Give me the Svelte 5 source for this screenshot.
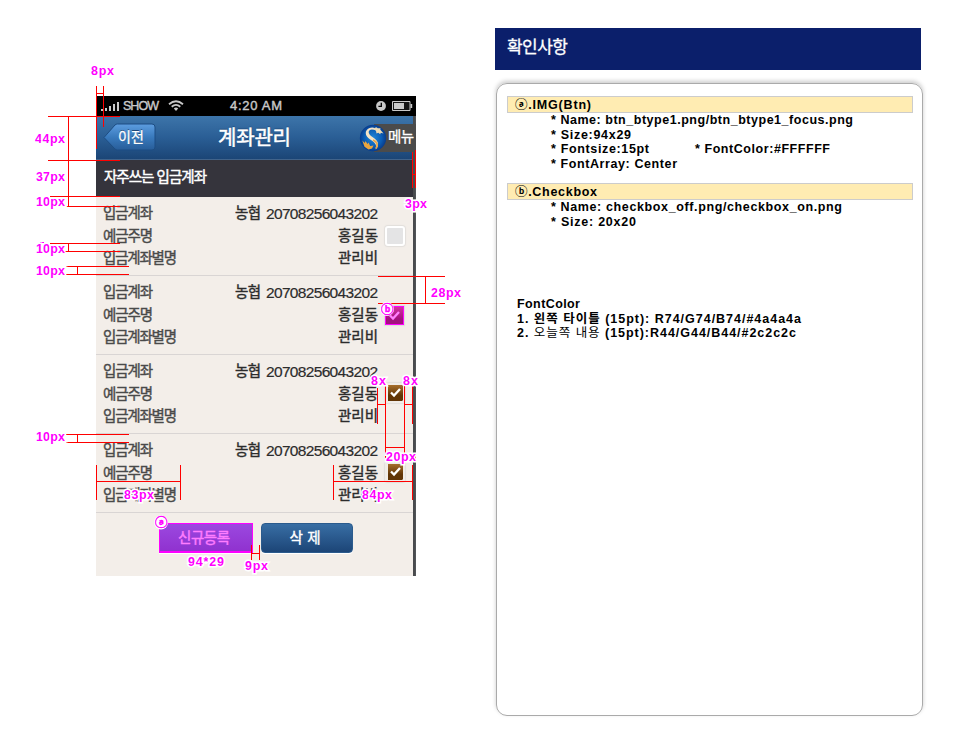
<script>
  // Spreads the letters of a text so that it takes up the given width.
  function fit(node, width) {
    const count = [...node.textContent].length;
    const natural = node.getBoundingClientRect().width;
    const spacing = (width - natural) / Math.max(1, count - 1);
    node.style.letterSpacing = `${spacing}px`;
    node.style.marginRight = `${-spacing}px`;
  }

  const accounts = [
    { checked: false },
    { checked: true },
    { checked: true },
    { checked: true }
  ];

  const guides = [
    'M96.5 86V149', 'M103.5 86V127', 'M96 93.5H103',
    'M48 116.5H120', 'M48 160.5H120', 'M50 196.5H120', 'M66 206.5H120', 'M68.5 116V206',
    'M50 243.5H120', 'M65 251.5H120', 'M68.5 243V251',
    'M66 266.5H129', 'M66 274.5H129', 'M77.5 266V274',
    'M412.5 152V188', 'M415.5 150V188', 'M412 174.5H416',
    'M378 276.5H445', 'M378 303.5H445', 'M425.5 276V303',
    'M66 434.5H129', 'M66 442.5H129', 'M77.5 434V442',
    'M96.5 465V500', 'M180.5 465V500', 'M96 481.5H180',
    'M377.5 388V424', 'M385.5 386V458', 'M404.5 386V458', 'M412.5 386V424',
    'M377 404.5H385', 'M404 404.5H412', 'M385 447.5H404',
    'M333.5 465V500', 'M412.5 465V500', 'M333 481.5H412',
    'M251.5 545V560', 'M259.5 545V560', 'M251 553.5H259'
  ].join('');

  const labels = [
    [91, 75, 23, '8px'], [35, 143, 30, '44px'], [36, 181, 29, '37px'], [36, 206, 29, '10px'],
    [405, 208, 22, '3px'], [36, 253, 29, '10px'], [36, 275, 29, '10px'], [431, 297, 30, '28px'],
    [371, 385, 15, '8x'], [403, 385, 15, '8x'], [36, 441, 29, '10px'], [386, 461, 30, '20px'],
    [124, 499, 30, '83px'], [362, 499, 30, '84px'], [188, 566, 36, '94*29'], [245, 570, 23, '9px']
  ];
</script>

<main>
  <section class="phone">
    <div class="status">
      <svg class="bars" width="18" height="10" viewBox="0 0 18 10"><path d="M0 8h2v2H0zM4 7h2v3H4zM8 5h2v5H8zM12 3h2v7h-2zM16 1h2v9h-2z" /></svg>
      <span class="carrier"><span class="fit" use:fit={36}>SHOW</span></span>
      <svg class="wifi" width="16" height="11" viewBox="0 0 16 11"><path d="M1 4.2Q8-1.6 15 4.2M3.7 6.7Q8 3 12.3 6.7" fill="none" stroke="#c9c9c9" stroke-width="1.8" /><path d="M5.8 8.4Q8 6.8 10.2 8.4L8 11z" /></svg>
      <span class="time"><span class="fit" use:fit={52}>4:20 AM</span></span>
      <svg class="clock" width="10" height="10" viewBox="0 0 10 10"><circle cx="5" cy="5" r="4.9" /><path d="M5.3 1.7V5.4H2.4" fill="none" stroke="#000" stroke-width="1.3" /></svg>
      <svg class="battery" width="21" height="10" viewBox="0 0 21 10"><path d="M.5.5h17.5v9H.5z" fill="#151515" stroke="#c9c9c9" /><path d="M2 2h10v6H2zM18.5 3h1.7v4h-1.7z" /></svg>
    </div>
    <div class="screen">
      <div class="content">
        <header>
          <div class="back">
            <svg width="53" height="29" viewBox="0 0 53 29">
              <defs><linearGradient id="backFill" x2="0" y2="1"><stop stop-color="#5d9de0" /><stop offset=".5" stop-color="#397abd" /><stop offset="1" stop-color="#285d99" /></linearGradient></defs>
              <path d="M1 14.5 12 2Q13 1 14.500 1H49Q52 1 52 4V24Q52 27 49 27H14.500Q13 27 12 26Z" fill="url(#backFill)" stroke="#1d4d83" />
            </svg>
            <span class="fit" use:fit={26}>이전</span>
          </div>
          <h1><span class="fit" use:fit={73}>계좌관리</span></h1>
          <div class="menu">
            <svg width="28" height="28" viewBox="0 0 28 28">
              <defs><radialGradient id="ball" cx=".5" cy=".5" r=".55"><stop stop-color="#2387d8" /><stop offset=".6" stop-color="#0b5db5" /><stop offset="1" stop-color="#073280" /></radialGradient></defs>
              <circle cx="14" cy="14" r="13.2" fill="url(#ball)" />
              <path d="M17.500 6.500Q11 4 9.800 7.200 9 10 13.800 13.300C20 17.300 20.500 21.500 16.500 25.500 18.500 20.500 15.500 18.500 11.200 15.600 5.500 11.600 5.500 6.500 10 4.200 13.500 2.800 16.500 3.500 17.500 6.500Z" fill="#f4e3c6" />
              <path d="M15 4.200 17.300 3.200 18.800 4.300 21.500 4.200 21.300 5.800 24.500 9.400 21.800 8.700 21.200 10.200 19.300 8.700 17.500 9.500 17 7Z" fill="#eedbb5" />
              <path d="M3.300 16.500 5.800 19 6.500 17 8.500 20 9.500 18.500 11.200 22 14.500 21.500 13 24.500 9.500 25.500 5.500 22.800Z" fill="#eba53e" />
              <path d="M14 16Q20.500 19 17 24.500" fill="none" stroke="#e9a64c" stroke-width="1.800" />
            </svg>
            <span class="fit" use:fit={26}>메뉴</span>
          </div>
        </header>
        <h2><span class="fit" use:fit={103}>자주쓰는 입금계좌</span></h2>
        <ul>
          {#each accounts as account, i}
            <li>
              <dl>
                <div><dt><span class="fit" use:fit={50}>입금계좌</span></dt><dd><span class="bank"><span class="fit" use:fit={26}>농협</span></span><span class="number"><span class="fit" use:fit={112}>20708256043202</span></span></dd></div>
                <div><dt><span class="fit" use:fit={50}>예금주명</span></dt><dd><span class="fit" use:fit={40}>홍길동</span></dd></div>
                <div><dt><span class="fit" use:fit={74}>입금계좌별명</span></dt><dd><span class="fit" use:fit={40}>관리비</span></dd></div>
              </dl>
              <div class="box" class:on={account.checked} class:marked={i === 1}>
                {#if account.checked}
                  <svg width="15" height="15" viewBox="0 0 15 15"><path d="M3 7.500 6 10.500 12 4" fill="none" stroke-width="2.300" /></svg>
                {/if}
              </div>
            </li>
          {/each}
        </ul>
        <footer>
          <div class="button selected"><span class="fit" use:fit={52}>신규등록</span></div>
          <div class="button"><span class="fit" use:fit={31}>삭 제</span></div>
        </footer>
      </div>
    </div>
  </section>

  <aside>
    <h3><span class="fit" use:fit={61}>확인사항</span></h3>
    <div class="notes">
      <div class="heading"><span class="fit" use:fit={76}>ⓐ.IMG(Btn)</span></div>
      <div class="lines">
        <p><span class="fit" use:fit={302}>* Name: btn_btype1.png/btn_btype1_focus.png</span></p>
        <p><span class="fit" use:fit={80}>* Size:94x29</span></p>
        <p class="pair"><span class="first"><span class="fit" use:fit={98}>* Fontsize:15pt</span></span><span class="fit" use:fit={135}>* FontColor:#FFFFFF</span></p>
        <p><span class="fit" use:fit={126}>* FontArray: Center</span></p>
      </div>
      <div class="heading second"><span class="fit" use:fit={82}>ⓑ.Checkbox</span></div>
      <div class="lines">
        <p><span class="fit" use:fit={291}>* Name: checkbox_off.png/checkbox_on.png</span></p>
        <p><span class="fit" use:fit={85}>* Size: 20x20</span></p>
      </div>
      <div class="colors">
        <p><span class="fit" use:fit={63}>FontColor</span></p>
        <p><span class="fit" use:fit={284}>1. 왼쪽 타이틀 (15pt): R74/G74/B74/#4a4a4a</span></p>
        <p><span class="fit" use:fit={279}>2. <span class="light">오늘쪽 내용</span> (15pt):R44/G44/B44/#2c2c2c</span></p>
      </div>
    </div>
  </aside>

  <svg class="guides" width="969" height="740" viewBox="0 0 969 740">
    <path d={guides} stroke="#f00" fill="none" shape-rendering="crispEdges" />
    <path d="M40 242.500H44" stroke="#f0f" />
    {#each labels as [x, y, width, text]}
      <text {x} {y} textLength={width}>{text}</text>
    {/each}
    <g class="badge">
      <circle cx="161" cy="522.500" r="7" /><text x="155" y="527" textLength="12">ⓐ</text>
      <circle cx="387" cy="309" r="7" /><text x="381" y="313.500" textLength="12">ⓑ</text>
    </g>
  </svg>
</main>

<style>
  :global(body) { margin: 0; background: #fff; }
  main {
    position: relative;
    display: flex;
    width: 969px;
    height: 740px;
    overflow: hidden;
    background: #fff;
    font-family: "Liberation Sans", "Noto Sans CJK KR", sans-serif;
  }
  h1, h2, h3, ul, dl, dt, dd, p { margin: 0; padding: 0; font-weight: normal; }
  .fit { display: inline-block; white-space: pre; }
  .phone { width: 320px; height: 480px; margin: 96px 0 0 96px; }
  .status {
    display: flex;
    align-items: center;
    height: 20px;
    box-sizing: border-box;
    padding: 0 3px 1px 5px;
    background: #000;
    color: #c9c9c9;
    font-size: 12.500px;
    -webkit-text-stroke: .4px;
  }
  .status svg { fill: #c9c9c9; flex: none; }
  .carrier { width: 36px; margin-left: 4px; }
  .wifi { margin-left: 9px; }
  .time { width: 52px; margin-left: 46px; font-size: 13px; }
  .clock { margin-left: 94px; }
  .battery { margin-left: 6px; }
  .screen { height: 460px; box-sizing: border-box; padding-right: 3px; background: linear-gradient(90deg, #4c4e50 317px, #45474a 318px, #55585b); }
  .content { height: 460px; background: #f3eee9; }
  header {
    display: flex;
    align-items: center;
    height: 44px;
    box-sizing: border-box;
    border-bottom: 1px solid #41638a;
    background: linear-gradient(#3d75aa, #2a5e95 50%, #1b4576);
    color: #fff;
  }
  .back { display: flex; width: 53px; height: 29px; margin-left: 7px; font-size: 14px; line-height: 28px; text-shadow: 0 -1px #1e4777; -webkit-text-stroke: .3px; }
  .back svg { flex: none; margin-right: -53px; }
  .back .fit { position: relative; margin-left: 15px; }
  h1 { width: 73px; margin-left: 62px; font-size: 20px; line-height: 44px; text-shadow: 0 -1px 1px #163c6a; -webkit-text-stroke: .5px; }
  .menu { display: flex; align-items: center; width: 42px; height: 28px; margin-left: auto; margin-right: -3px; background: #4b4b4b; font-size: 14.500px; line-height: 27px; -webkit-text-stroke: .3px; }
  .menu svg { flex: none; margin: 0 0 0 -15px; }
  .menu .fit { margin-left: 1px; }
  h2 {
    height: 37px;
    box-sizing: border-box;
    padding-left: 8px;
    background: #35343c;
    color: #fff;
    font-size: 14.500px;
    line-height: 35px;
    -webkit-text-stroke: .45px;
  }
  ul { list-style: none; }
  li { display: flex; height: 79px; box-sizing: border-box; border-bottom: 1px solid #d9d5d4; }
  dl { width: 275px; padding: 5px 0 0 7px; font-size: 14.500px; line-height: 23.500px; }
  dl div { display: flex; justify-content: space-between; height: 22.500px; }
  dt { color: #4a4a4a; -webkit-text-stroke: .4px; }
  dd { display: flex; color: #2c2c2c; -webkit-text-stroke: .4px; }
  .bank { width: 31px; }
  .number { width: 112px; font-size: 15.500px; -webkit-text-stroke: .2px; }
  .box {
    width: 20px;
    height: 20px;
    box-sizing: border-box;
    margin: 29px 0 0 7px;
    border: 2px solid #fff;
    border-radius: 3px;
    box-shadow: 0 0 1px 1px #e2dedb;
    background: #e4e4e5;
  }
  .box svg { display: block; stroke: #fff; }
  .on { margin-top: 28px; padding: 0 0 0 1px; border-color: #f0ece8; background: linear-gradient(#a66e2b, #613506 65%) content-box; }
  .marked { width: 19px; height: 19px; margin-top: 30px; border: 1px solid #f0f; border-radius: 0; padding: 1px; background: linear-gradient(#d331a1, #a3117e 70%); }
  .marked svg { stroke: #ff82ff; }
  footer { display: flex; gap: 8px; padding: 10px 0 0 63px; }
  .button {
    display: flex;
    justify-content: center;
    width: 92px;
    height: 30px;
    box-sizing: border-box;
    padding-right: 4px;
    border: 1px solid #2b5b8d;
    border-radius: 4px;
    background: linear-gradient(#386ea4, #1c4577);
    color: #fff;
    font-size: 14.500px;
    line-height: 28px;
    box-shadow: 0 1px #fff;
    -webkit-text-stroke: .4px;
  }
  .selected { width: 94px; border: 1px solid #f0f; border-bottom-width: 2px; border-radius: 0; background: linear-gradient(#9b48e0, #9032cf); color: #ff7dff; }
  aside { width: 428px; margin: 28px 0 0 79px; }
  h3 { width: 426px; height: 42px; box-sizing: border-box; padding-left: 12px; background: #0b1f6b; color: #fff; font-size: 17px; line-height: 40px; -webkit-text-stroke: .3px; }
  .notes {
    width: 427px;
    height: 633px;
    box-sizing: border-box;
    margin: 13px 0 0 1px;
    padding: 12px 9px 0 10px;
    border: 1px solid #aaa;
    border-radius: 11px;
    box-shadow: 0 -2px 4px #ccc;
    color: #000;
    font-size: 12.500px;
    font-weight: bold;
    line-height: 14.500px;
  }
  .heading { height: 17px; box-sizing: border-box; padding-left: 7px; border: 1px solid #ccc; background: #ffecb2; line-height: 16px; }
  .second { margin-top: 12px; }
  .lines { padding-left: 44px; }
  p { height: 14.500px; font-weight: bold; }
  .pair { display: flex; }
  .first { width: 144px; }
  .colors { margin: 68px 0 0 10px; }
  .light { font-weight: normal; }
  .guides { position: absolute; left: 0; top: 0; }
  .guides text { fill: #f0f; stroke: #fff; stroke-width: 3px; paint-order: stroke; font-size: 12.500px; font-weight: bold; }
  .badge circle { fill: #fff; }
  .guides .badge text { stroke: #f0f; stroke-width: .4px; }
</style>
